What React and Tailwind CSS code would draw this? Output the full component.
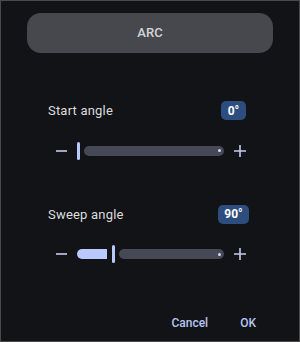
const Minus = () => (
  <svg width="11" height="12" viewBox="0 0 11 12" className="shrink-0">
    <path d="M0 6h11" stroke="#c3cdee" strokeWidth="1.6" />
  </svg>
);

const Plus = () => (
  <svg width="12" height="12" viewBox="0 0 12 12" className="shrink-0">
    <path d="M0 6h12M6 0v12" stroke="#c3cdee" strokeWidth="1.6" />
  </svg>
);

const Slider = ({ active }) => (
  <div className="flex items-center h-[18px] pl-[55px]">
    <Minus />
    <div className="flex items-center ml-[10px] w-[147px]">
      {active > 0 && (
        <div
          className="h-[10px] bg-[#b8c9fa] rounded-l-full rounded-r-[3px] mr-[5px]"
          style={{ width: active }}
        />
      )}
      <div className="w-[3px] h-[18px] rounded-full bg-[#b8c9fa] shrink-0" />
      <div className="flex-1 h-[10px] ml-[4px] bg-[#454955] rounded-full flex items-center justify-end pr-[3px]">
        <div className="w-[3px] h-[3px] rounded-full bg-[#d4dcf4]" />
      </div>
    </div>
    <div className="ml-[10px]">
      <Plus />
    </div>
  </div>
);

const Row = ({ label, value, badgeW, pr }) => (
  <div className="flex items-center justify-between pl-[47px]" style={{ paddingRight: pr }}>
    <span className="text-[13px] text-[#dcdcdc] tracking-[0.2px]">{label}</span>
    <span
      className="h-[19px] rounded-[5px] bg-[#2d4d7f] text-white text-[12px] font-bold flex items-center justify-center"
      style={{ width: badgeW }}
    >
      {value}
    </span>
  </div>
);

export default function App() {
  return (
    <div
      className="w-[300px] h-[342px] bg-[#121317] border border-[#4a4a4a] flex flex-col overflow-hidden"
      style={{ fontFamily: "Roboto, 'Liberation Sans', sans-serif" }}
    >
      <div className="mt-[12px] mx-[26px] h-[40px] rounded-[14px] bg-[#46484e] flex items-center justify-center text-[13px] font-medium text-[#d4d4d6]">
        ARC
      </div>

      <div className="mt-[48px]">
        <Row label="Start angle" value="0°" badgeW={25} pr={53} />
      </div>
      <div className="mt-[21px]">
        <Slider active={0} />
      </div>

      <div className="mt-[45px]">
        <Row label="Sweep angle" value="90°" badgeW={31} pr={50} />
      </div>
      <div className="mt-[21px]">
        <Slider active={30} />
      </div>

      <div className="mt-auto mb-[9px] flex justify-end items-center gap-[32px] pr-[43px] text-[12px] font-medium text-[#b8c6f2]">
        <span>Cancel</span>
        <span>OK</span>
      </div>
    </div>
  );
}
